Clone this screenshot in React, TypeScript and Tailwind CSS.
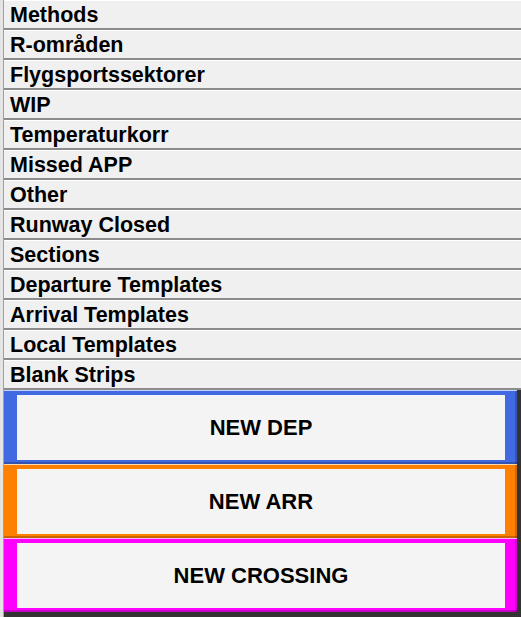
const rows = [
  "Methods",
  "R-områden",
  "Flygsportssektorer",
  "WIP",
  "Temperaturkorr",
  "Missed APP",
  "Other",
  "Runway Closed",
  "Sections",
  "Departure Templates",
  "Arrival Templates",
  "Local Templates",
  "Blank Strips",
];

const buttons = [
  { label: "NEW DEP", color: "bg-[#4169e1]" },
  { label: "NEW ARR", color: "bg-[#ff8000]" },
  { label: "NEW CROSSING", color: "bg-[#ff00ff]" },
];

export default function App() {
  return (
    <div
      className="flex w-[521px] h-[617px] bg-[#e2e2e2] overflow-hidden"
      style={{ fontFamily: '"Liberation Sans", Arial, sans-serif' }}
    >
      {/* left edge strip */}
      <div className="w-[4px] h-full border-r border-[#a0a0a0] bg-[#e4e4e4]" />

      <div className="flex flex-col flex-1">
        {/* list of categories */}
        <div className="flex flex-col">
          {rows.map((row) => (
            <div
              key={row}
              className="h-[30px] flex items-center pl-[6px] pt-[2px] bg-[#f0f0f0] border-t border-t-white border-b-2 border-b-[#8c8c8c] text-[21.5px] font-bold text-black leading-none"
            >
              {row}
            </div>
          ))}
        </div>

        {/* action buttons */}
        <div className="flex-1 flex flex-col bg-[#333333] pr-[4px] pb-[5px]">
          {buttons.map((b) => (
            <div
              key={b.label}
              className={`h-[74px] ${b.color} pt-[5px] pb-[4px] pl-[13px] pr-[12px] shadow-[inset_0_1px_0_rgba(255,255,255,0.7),inset_0_-2px_0_rgba(0,0,0,0.22),inset_-2px_0_0_rgba(0,0,0,0.18)]`}
            >
              <div className="h-full bg-[#f4f4f4] flex items-center justify-center text-[22px] font-bold text-black">
                {b.label}
              </div>
            </div>
          ))}
        </div>
      </div>
    </div>
  );
}
